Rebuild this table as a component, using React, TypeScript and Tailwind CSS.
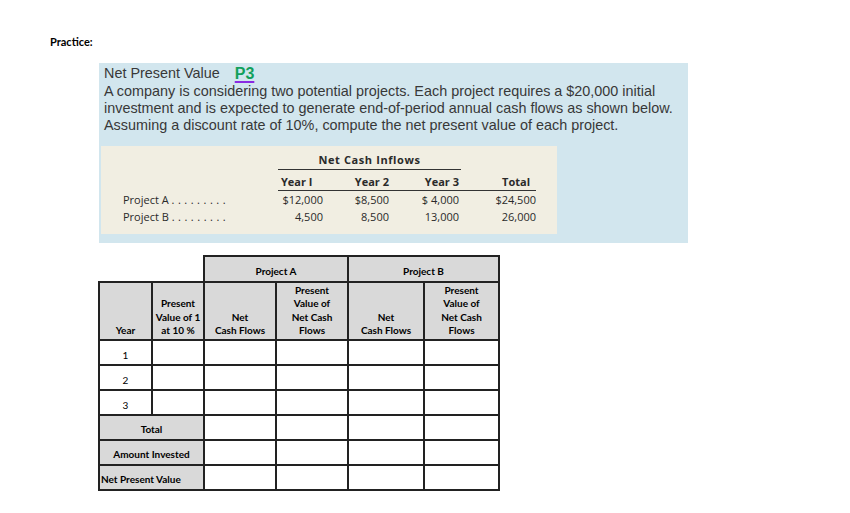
export default function App() {
  const cell = "border-2 border-[#222]"
  const head = "border-2 border-[#222] bg-[#d9d9d9] font-bold text-center align-bottom pb-[1px] leading-[13.5px]"
  const label = "border-2 border-[#222] bg-[#d9d9d9] font-bold text-center align-bottom pb-[2px] leading-[13.5px]"
  const blank = "border-2 border-[#222] bg-white"

  return (
    <div className="w-[850px] h-[513px] bg-white relative font-['Lato',sans-serif] text-black">
      <div className="pl-[50px] pt-[34px] text-[11px] font-bold font-['Lato',sans-serif]">Practice:</div>

      {/* problem box */}
      <div className="ml-[99px] mt-[12px] w-[589px] h-[180px] bg-[#d2e6ee] font-['Liberation_Sans',Arial,sans-serif] text-[#383838] pt-[2px]">
        <div className="pl-[5px] text-[14.4px] leading-[17px]">
          <div className="flex items-center gap-[15px]">
            <span>Net Present Value</span>
            <span className="font-bold text-[#12a05c] underline decoration-[#8a2be2] decoration-2 underline-offset-2 text-[16px]">P3</span>
          </div>
          <p className="mt-[1px]">
            A company is considering two potential projects. Each project requires a $20,000 initial investment and is expected to generate end-of-period annual cash flows as shown below. Assuming a discount rate of 10%, compute the net present value of each project.
          </p>
        </div>

        <div className="ml-[2px] mt-[12px] w-[456px] h-[88px] bg-[#f1eee2] font-['Open_Sans',sans-serif] text-[11px] leading-[15px] text-[#2a2a2a] pt-[6px]">
          <div className="flex">
            <div className="w-[177px]" />
            <div className="w-[183px] text-center font-bold border-b border-[#333] pb-[2px] tracking-[0.6px]">Net Cash Inflows</div>
          </div>
          <div className="flex mt-[4px]">
            <div className="w-[177px]" />
            <div className="flex border-b border-[#333] pb-[1px] font-bold whitespace-nowrap">
              <div className="w-[45px] pl-[3px]">Year I</div>
              <div className="w-[68px] text-right pr-[2px]">Year 2</div>
              <div className="w-[70px] text-right pr-[2px]">Year 3</div>
              <div className="w-[75px] text-right pr-[6px]">Total</div>
            </div>
          </div>
          <div className="flex mt-[1px]">
            <div className="w-[177px] pl-[22px] whitespace-nowrap">Project A <span className="tracking-[3.5px]">.........</span></div>
            <div className="w-[45px] text-right">$12,000</div>
            <div className="w-[68px] text-right pr-[2px]">$8,500</div>
            <div className="w-[70px] text-right pr-[2px]">$ 4,000</div>
            <div className="w-[75px] text-right">$24,500</div>
          </div>
          <div className="flex mt-[2px]">
            <div className="w-[177px] pl-[22px] whitespace-nowrap">Project B <span className="tracking-[3.5px]">.........</span></div>
            <div className="w-[45px] text-right">4,500</div>
            <div className="w-[68px] text-right pr-[2px]">8,500</div>
            <div className="w-[70px] text-right pr-[2px]">13,000</div>
            <div className="w-[75px] text-right">26,000</div>
          </div>
        </div>
      </div>

      {/* answer grid */}
      <table className="ml-[98px] mt-[12px] border-collapse table-fixed text-[10px] font-['Lato',sans-serif]">
        <colgroup>
          <col className="w-[53px]" />
          <col className="w-[52px]" />
          <col className="w-[72px]" />
          <col className="w-[72px]" />
          <col className="w-[76px]" />
          <col className="w-[75px]" />
        </colgroup>
        <tbody>
          <tr className="h-[26px]">
            <td colSpan={2} />
            <td colSpan={2} className={label}>Project A</td>
            <td colSpan={2} className={label}>Project B</td>
          </tr>
          <tr className="h-[58px]">
            <td className={head}>Year</td>
            <td className={head}>Present<br />Value of 1<br />at 10 %</td>
            <td className={head}>Net<br />Cash Flows</td>
            <td className={head}>Present<br />Value of<br />Net Cash<br />Flows</td>
            <td className={head}>Net<br />Cash Flows</td>
            <td className={head}>Present<br />Value of<br />Net Cash<br />Flows</td>
          </tr>
          {["1", "2", "3"].map((y) => (
            <tr key={y} className="h-[25px]">
              <td className={cell + " text-center align-bottom pb-[1px]"}>{y}</td>
              <td className={blank} />
              <td className={blank} />
              <td className={blank} />
              <td className={blank} />
              <td className={blank} />
            </tr>
          ))}
          <tr className="h-[25px]">
            <td colSpan={2} className={label}>Total</td>
            <td className={blank} />
            <td className={blank} />
            <td className={blank} />
            <td className={blank} />
          </tr>
          <tr className="h-[25px]">
            <td colSpan={2} className={label}>Amount Invested</td>
            <td className={blank} />
            <td className={blank} />
            <td className={blank} />
            <td className={blank} />
          </tr>
          <tr className="h-[25px]">
            <td colSpan={2} className={label + " !text-left pl-[1px]"}>Net Present Value</td>
            <td className={blank} />
            <td className={blank} />
            <td className={blank} />
            <td className={blank} />
          </tr>
        </tbody>
      </table>
    </div>
  )
}
